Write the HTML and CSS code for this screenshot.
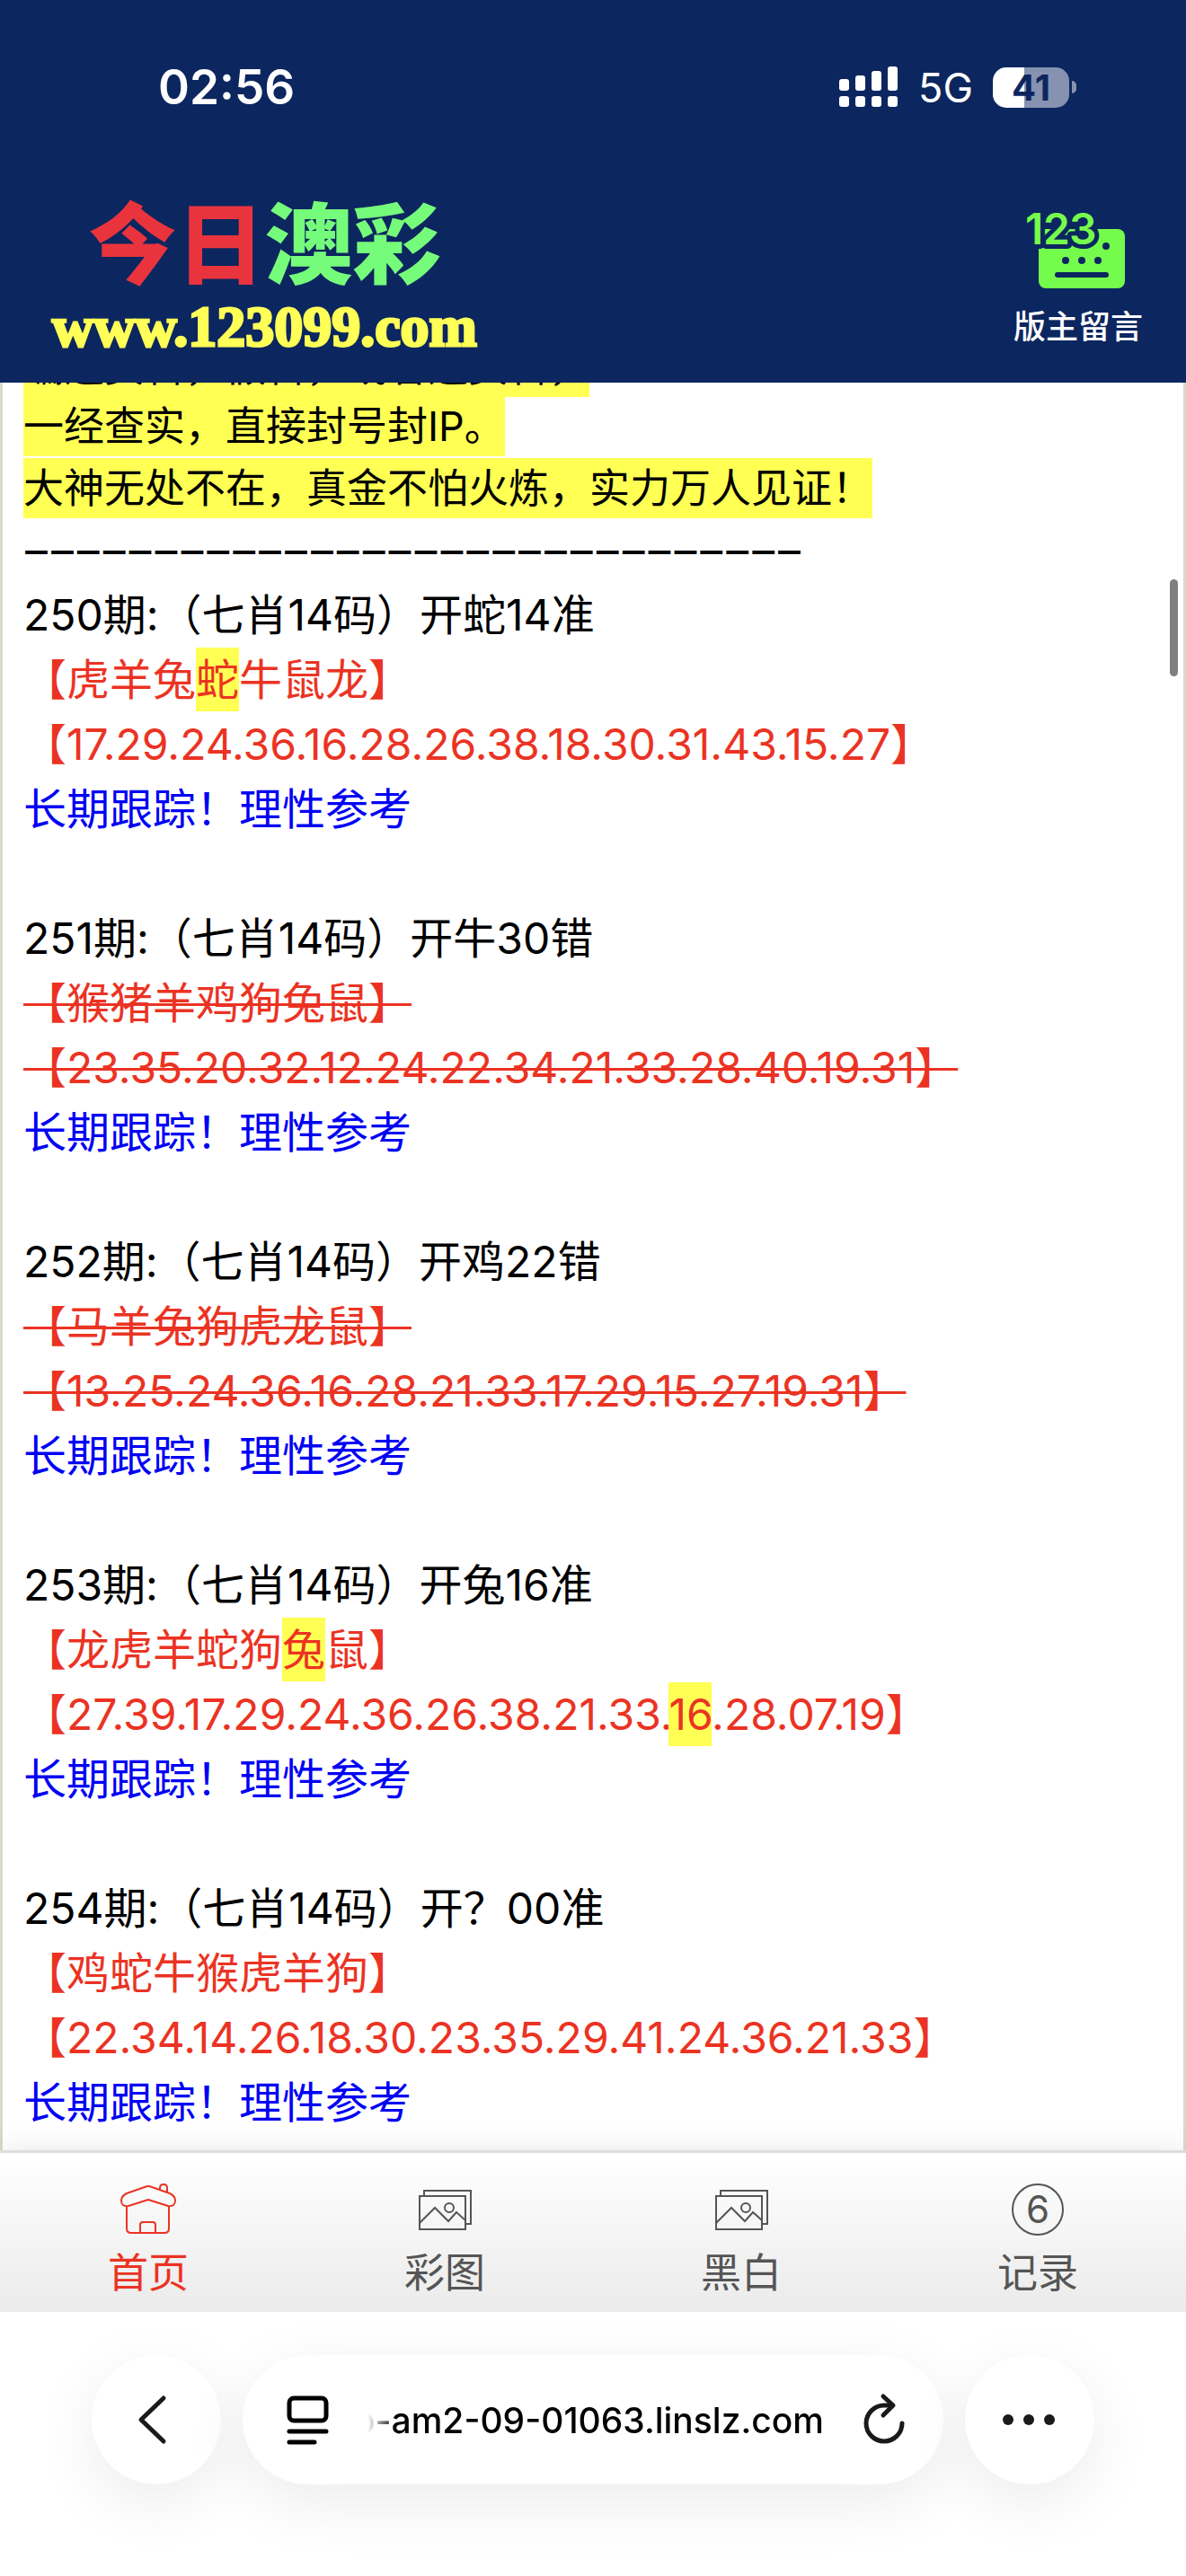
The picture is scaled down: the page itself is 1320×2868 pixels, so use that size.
FILE: index.html
```html
<!DOCTYPE html>
<html lang="zh-CN">
<head>
    <meta charset="UTF-8">
    <meta name="viewport" content="width=device-width, initial-scale=1.0">
    <title>今日澳彩</title>
    <link rel="stylesheet" href="styles.css">
</head>
<body>
    <header class="header">
        <div class="status">
            <span class="time">02:56</span>
            <div class="status-right">
                <svg class="signal" width="66" height="46" viewBox="0 0 66 46" fill="#fff">
                    <rect x="0" y="14" width="11" height="13" rx="3"/>
                    <rect x="18" y="10" width="11" height="17" rx="3"/>
                    <rect x="36" y="5" width="11" height="22" rx="3"/>
                    <rect x="54" y="0" width="11" height="27" rx="3"/>
                    <rect x="0" y="33" width="11" height="12" rx="3"/>
                    <rect x="18" y="33" width="11" height="12" rx="3"/>
                    <rect x="36" y="33" width="11" height="12" rx="3"/>
                    <rect x="54" y="33" width="11" height="12" rx="3"/>
                </svg>
                <span class="network">5G</span>
                <div class="battery">
                    <span class="battery-level">41</span>
                    <span class="battery-tip"></span>
                </div>
            </div>
        </div>
        <div class="topbar">
            <a class="logo" href="#">
                <span class="logo-name"><span class="logo-red">今日</span><span class="logo-green">澳彩</span></span>
                <span class="logo-url">www.123099.com</span>
            </a>
            <a class="message" href="#">
                <svg width="108" height="88" viewBox="0 0 108 88">
                    <rect x="10" y="21" width="96" height="66" rx="8" fill="#75fb4c"/>
                    <circle cx="85" cy="40" r="4" fill="#0c265f"/>
                    <circle cx="40" cy="56" r="4" fill="#0c265f"/>
                    <circle cx="58" cy="56" r="4" fill="#0c265f"/>
                    <circle cx="76" cy="56" r="4" fill="#0c265f"/>
                    <path d="M31 72h54" stroke="#0c265f" stroke-width="6" stroke-linecap="round"/>
                    <text class="message-digits" x="-5 15 44" y="38">123</text>
                </svg>
                <span>版主留言</span>
            </a>
        </div>
    </header>

    <main class="content">
        <div class="posts">
            <div class="notice">
                <p><mark>编造资料，假料，或者造资料，</mark></p>
                <p><mark>一经查实，直接封号封IP。</mark></p>
                <p><mark>大神无处不在，真金不怕火炼，实力万人见证！</mark></p>
            </div>
            <p class="divider">−−−−−−−−−−−−−−−−−−−−−−−−−−−−−−</p>

            <section class="post">
                <p>250期:（七肖14码）开蛇14准</p>
                <p class="red">【虎羊兔<mark>蛇</mark>牛鼠龙】</p>
                <p class="red">【17.29.24.36.16.28.26.38.18.30.31.43.15.27】</p>
                <p class="blue">长期跟踪！理性参考</p>
            </section>

            <section class="post">
                <p>251期:（七肖14码）开牛30错</p>
                <p class="red"><s>【猴猪羊鸡狗兔鼠】</s></p>
                <p class="red"><s>【23.35.20.32.12.24.22.34.21.33.28.40.19.31】</s></p>
                <p class="blue">长期跟踪！理性参考</p>
            </section>

            <section class="post">
                <p>252期:（七肖14码）开鸡22错</p>
                <p class="red"><s>【马羊兔狗虎龙鼠】</s></p>
                <p class="red"><s>【13.25.24.36.16.28.21.33.17.29.15.27.19.31】</s></p>
                <p class="blue">长期跟踪！理性参考</p>
            </section>

            <section class="post">
                <p>253期:（七肖14码）开兔16准</p>
                <p class="red">【龙虎羊蛇狗<mark>兔</mark>鼠】</p>
                <p class="red">【27.39.17.29.24.36.26.38.21.33.<mark>16</mark>.28.07.19】</p>
                <p class="blue">长期跟踪！理性参考</p>
            </section>

            <section class="post">
                <p>254期:（七肖14码）开？00准</p>
                <p class="red">【鸡蛇牛猴虎羊狗】</p>
                <p class="red">【22.34.14.26.18.30.23.35.29.41.24.36.21.33】</p>
                <p class="blue">长期跟踪！理性参考</p>
            </section>
        </div>
        <span class="scroll-thumb"></span>
    </main>

    <nav class="tabs">
        <a class="tab active" href="#">
            <svg width="64" height="60" viewBox="0 0 64 60" fill="none" stroke="currentColor" stroke-width="2" stroke-linejoin="round">
                <path d="M45 7V5q0-4 4-4t4 4v5"/>
                <path d="M28 4q4-2 8 0L56 11q6 3 6 8 0 7-8 6L32 18 10 25q-8 1-8-6 0-5 6-8z"/>
                <path d="M8 25v25q0 5 5 5h37q5 0 5-5V25"/>
                <path d="M23 55V46q0-3 3-3h11q3 0 3 3v9"/>
            </svg>
            <span>首页</span>
        </a>
        <a class="tab" href="#">
            <svg width="64" height="60" viewBox="0 0 64 60" fill="none" stroke="currentColor" stroke-width="2">
                <path d="M9 13V8h52v37h-6"/>
                <rect x="4" y="14" width="51" height="37"/>
                <circle cx="37" cy="27" r="5"/>
                <path d="M4 44l17-17 15 15 9-10 10 9"/>
            </svg>
            <span>彩图</span>
        </a>
        <a class="tab" href="#">
            <svg width="64" height="60" viewBox="0 0 64 60" fill="none" stroke="currentColor" stroke-width="2">
                <path d="M9 13V8h52v37h-6"/>
                <rect x="4" y="14" width="51" height="37"/>
                <circle cx="37" cy="27" r="5"/>
                <path d="M4 44l17-17 15 15 9-10 10 9"/>
            </svg>
            <span>黑白</span>
        </a>
        <a class="tab" href="#">
            <svg width="64" height="60" viewBox="0 0 64 60" fill="none" stroke="currentColor" stroke-width="2">
                <circle cx="32" cy="29" r="28"/>
                <text class="tab-digit" x="32" y="44" text-anchor="middle">6</text>
            </svg>
            <span>记录</span>
        </a>
    </nav>

    <footer class="browser">
        <button class="round" type="button" aria-label="返回">
            <svg width="60" height="60" viewBox="0 0 60 60" fill="none" stroke="#1a1a1a" stroke-width="5" stroke-linecap="round" stroke-linejoin="round">
                <path d="M38 6L13 30l25 24"/>
            </svg>
        </button>
        <div class="address">
            <button class="plain" type="button" aria-label="页面菜单">
                <svg width="50" height="60" viewBox="0 0 50 60" fill="none" stroke="#000" stroke-width="5" stroke-linecap="round">
                    <rect x="5" y="6" width="41" height="25" rx="5"/>
                    <path d="M5 43h41M5 55h28"/>
                </svg>
            </button>
            <button class="url" type="button"><span>o-am2-09-01063.linslz.com</span></button>
            <button class="plain" type="button" aria-label="刷新">
                <svg width="50" height="60" viewBox="0 0 50 60" fill="none" stroke="#1a1a1a" stroke-width="5" stroke-linecap="round" stroke-linejoin="round">
                    <path d="M45 34a20 20 0 1 1-20-20h9"/>
                    <path d="M24 4l11 10-11 11"/>
                </svg>
            </button>
        </div>
        <button class="round" type="button" aria-label="更多">
            <svg width="60" height="60" viewBox="0 0 60 60" fill="#1a1a1a">
                <circle cx="6" cy="30" r="6"/>
                <circle cx="29" cy="30" r="6"/>
                <circle cx="52" cy="30" r="6"/>
            </svg>
        </button>
    </footer>
</body>
</html>
```
FILE: styles.css
```css
/* General Styles */
* {
    box-sizing: border-box;
}

body {
    display: flex;
    flex-direction: column;
    min-height: 100vh;
    margin: 0;
    background: #fff;
    color: #000;
    font-family: Inter, "Noto Sans CJK SC", sans-serif;
}

p {
    margin: 0;
}

a {
    text-decoration: none;
}

button {
    padding: 0;
    border: none;
    background: none;
    font-family: inherit;
    cursor: pointer;
}

svg {
    display: block;
    overflow: visible;
}

/* Header */
.header {
    height: 426px;
    background: #0c265f;
    color: #fff;
}

.status {
    display: flex;
    justify-content: space-between;
    align-items: center;
    height: 194px;
    padding: 0 122px 0 176px;
}

.time {
    font-size: 53px;
    font-weight: 600;
}

.status-right {
    display: flex;
    align-items: center;
}

.network {
    margin: 0 22px;
    font-size: 45px;
}

.battery {
    display: flex;
    align-items: center;
    gap: 3px;
}

.battery-level {
    width: 85px;
    border-radius: 15px;
    background: linear-gradient(90deg, #fff 41%, #8692af 41%);
    color: #0c265f;
    font-size: 40px;
    font-weight: 700;
    line-height: 45px;
    text-align: center;
}

.battery-tip {
    width: 5px;
    height: 14px;
    border-radius: 0 5px 5px 0;
    background: #8692af;
}

.topbar {
    display: flex;
    justify-content: space-between;
    align-items: flex-start;
    padding: 0 48px 0 58px;
}

.logo {
    display: flex;
    flex-direction: column;
    align-items: center;
    padding-top: 24px;
}

.logo-name {
    font-size: 98px;
    font-weight: 900;
    line-height: 110px;
}

.logo-red {
    color: #e9343e;
}

.logo-green {
    color: #76fc7b;
}

.logo-url {
    color: #ffff57;
    font-family: "Liberation Serif", serif;
    font-size: 64px;
    font-weight: 700;
    line-height: 72px;
    -webkit-text-stroke: 3px #ffff57;
}

.message {
    display: flex;
    flex-direction: column;
    align-items: center;
    gap: 18px;
    padding-top: 40px;
    color: #fff;
    font-size: 36px;
    font-weight: 500;
    line-height: 48px;
}

.message-digits {
    fill: #75fb4c;
    stroke: #0c265f;
    stroke-width: 10px;
    stroke-linejoin: round;
    paint-order: stroke;
    font-size: 48px;
    font-weight: 600;
}

/* Posts */
.content {
    position: relative;
    flex: 1;
    overflow: hidden;
    border: solid #d5dcc6;
    border-width: 0 3px;
}

.posts {
    margin-top: -50px;
    padding: 0 23px;
    font-size: 48px;
    line-height: 72px;
}

.notice {
    font-size: 45px;
    line-height: 66px;
}

.notice p:last-child {
    margin-top: 3px;
}

.divider {
    font-family: "DejaVu Sans Mono", monospace;
}

mark {
    padding: 6px 0;
    background: #ffff54;
    color: inherit;
}

.post {
    padding-bottom: 72px;
}

.post:last-child {
    padding-bottom: 0;
}

.red {
    color: #eb3323;
}

.blue {
    color: #0000f5;
}

s {
    text-decoration-thickness: 3px;
}

.scroll-thumb {
    position: absolute;
    top: 219px;
    right: 6px;
    width: 9px;
    height: 108px;
    border-radius: 5px;
    background: #7f7f7f;
}

/* Bottom tabs */
.tabs {
    position: relative;
    display: grid;
    grid-template-columns: repeat(4, 1fr);
    height: 180px;
    border-top: 3px solid #ddd;
    background: linear-gradient(#fff, #ebebeb);
    box-shadow: 0 0 30px rgba(0, 0, 0, 0.1);
}

.tab {
    display: flex;
    flex-direction: column;
    align-items: center;
    gap: 10px;
    padding-top: 34px;
    color: #555;
    font-size: 45px;
    line-height: 60px;
}

.tab.active {
    color: #eb3323;
}

.tab-digit {
    fill: currentColor;
    stroke: none;
    font-size: 42px;
}

/* Browser bar */
.browser {
    position: relative;
    display: flex;
    gap: 24px;
    height: 294px;
    padding: 48px 102px 0;
    background: #fff;
}

.round,
.address {
    display: flex;
    align-items: center;
    height: 144px;
    border-radius: 72px;
    background: #fff;
    box-shadow: 0 20px 70px rgba(0, 0, 0, 0.08);
}

.round {
    flex: none;
    justify-content: center;
    width: 144px;
}

.address {
    flex: 1;
    min-width: 0;
    padding: 0 41px 0 47px;
}

.plain {
    flex: none;
}

.url {
    display: flex;
    flex: 1;
    justify-content: flex-end;
    min-width: 0;
    margin: 0 42px;
    overflow: hidden;
    color: #000;
    font-size: 39px;
    font-weight: 500;
    white-space: nowrap;
    -webkit-mask-image: linear-gradient(90deg, transparent, #000 32px);
    mask-image: linear-gradient(90deg, transparent, #000 32px);
}
```
